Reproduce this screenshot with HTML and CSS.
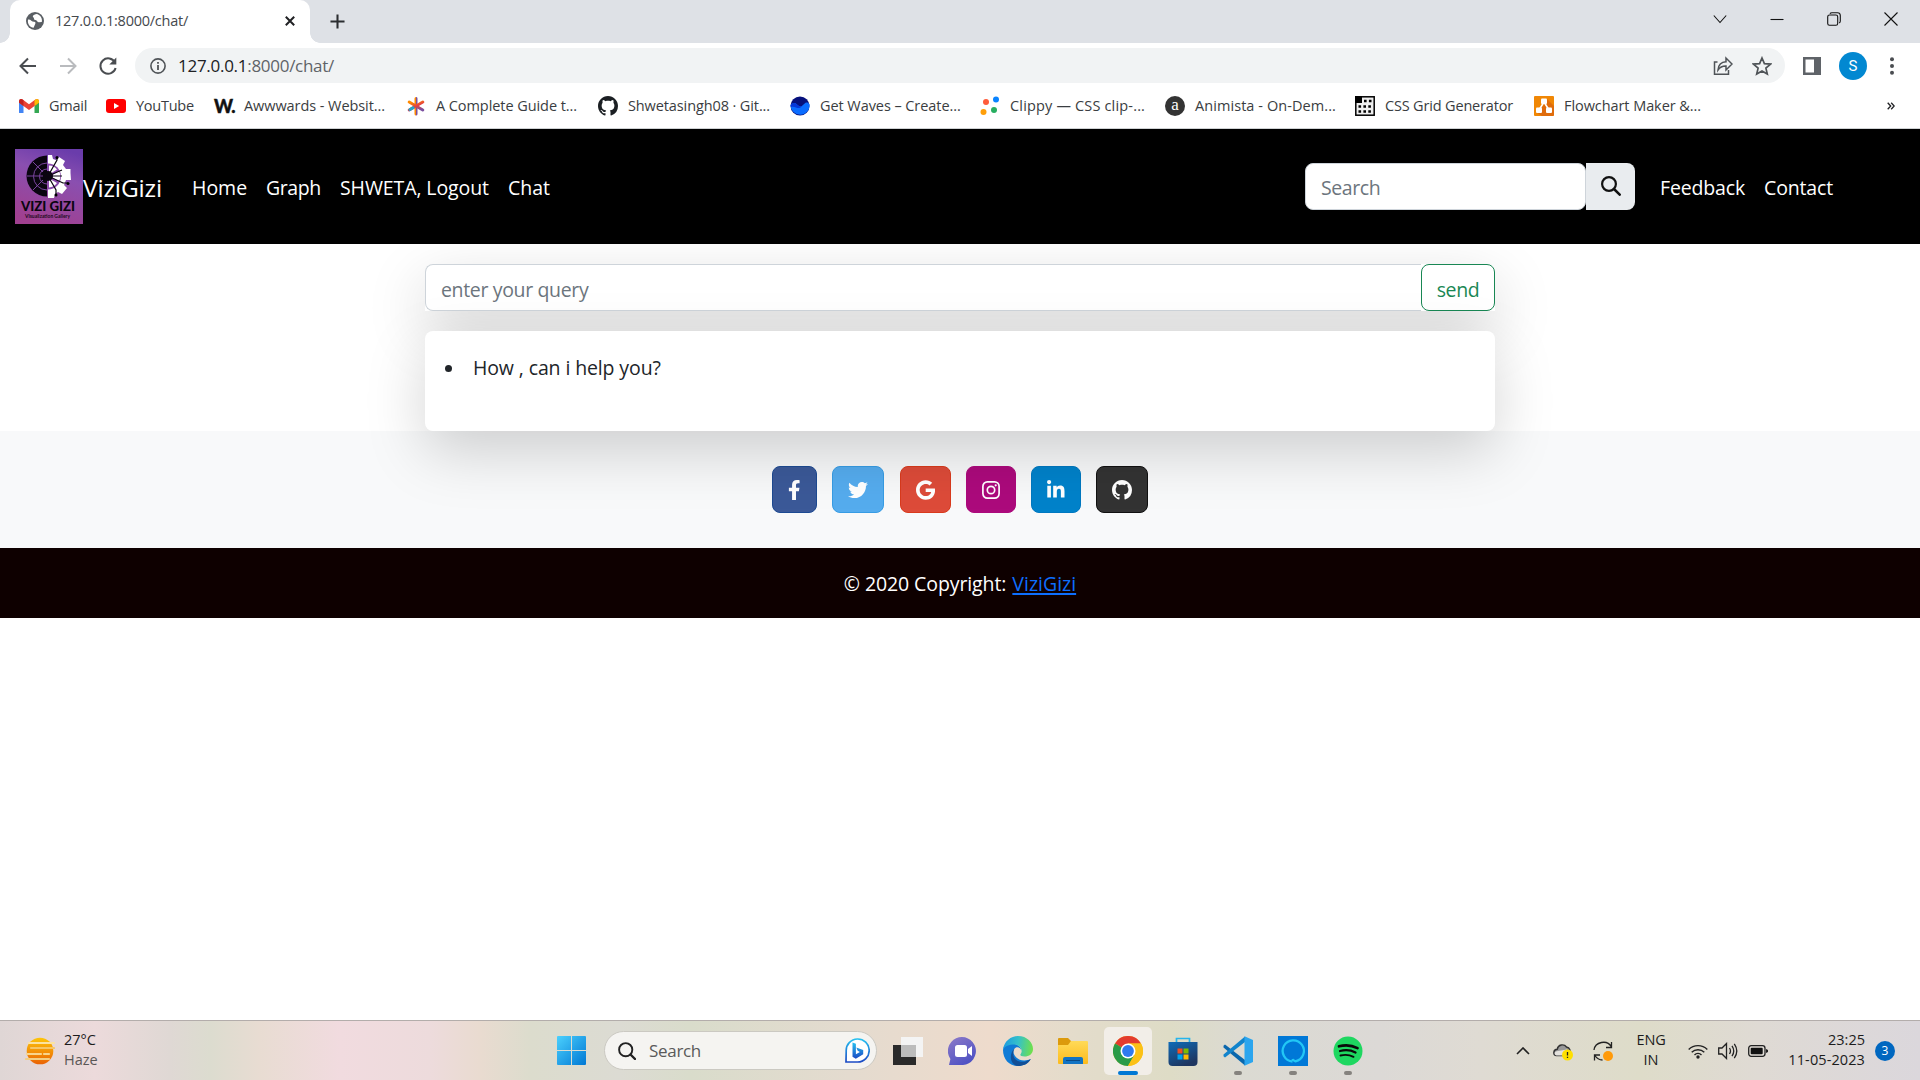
FILE: index.html
```html
<!DOCTYPE html>
<html lang="en">
<head>
<meta charset="utf-8">
<title>127.0.0.1:8000/chat/</title>
<link rel="stylesheet" href="styles.css">
</head>
<body>
<header class="browser">
  <div class="tabstrip">
    <div class="tab">
      <svg class="tab-icon" viewBox="0 0 18 18"><circle cx="9" cy="9" r="9" fill="#5a5f64"/><path d="M2 7.500C5 7 5.500 10 8.200 9.800c1.300 0 1.600 1 1 2.200l-1.600 3.800C4 15.700 1.200 12 2 7.500zM10.500 1.900c-2.500.4-4.500 2-3.200 3.300 1.200 1 .2 2.600 2.200 2.800 2 .1 1.500 2.400 3.500 2.300l2.800-.2C16.800 6 14 2.500 10.500 1.900z" fill="#fff"/></svg>
      <span class="t tab-title">127.0.0.1:8000/chat/</span>
      <svg class="tab-close" viewBox="0 0 10 10"><path d="M.8.8l8.400 8.400M9.200.8L.8 9.200" stroke="#202124" stroke-width="2"/></svg>
    </div>
    <svg class="tab-new" viewBox="0 0 16 16"><path d="M8 .5v15M.5 8h15" stroke="#2b2e31" stroke-width="2.200"/></svg>
    <div class="window-controls">
      <svg viewBox="0 0 14 14"><path d="M.8 3.500L7 10.500l6.200-7" /></svg>
      <svg viewBox="0 0 14 14"><path d="M.5 7.500h13"/></svg>
      <svg viewBox="0 0 14 14"><rect x=".7" y="3" width="10" height="10.300" rx="1.800"/><path d="M3 1.800Q3.500.7 5 .7h5.500q2.800 0 2.800 2.800V9q0 1.500-1.100 2"/></svg>
      <svg viewBox="0 0 14 14"><path d="M.5.5l13 13M13.500.5l-13 13"/></svg>
    </div>
  </div>
  <div class="toolbar">
    <div class="nav-icons">
      <svg viewBox="0 0 20 20"><path d="M18 10H3M10 2.500L2.500 10l7.500 7.500" stroke="#4a4d51"/></svg>
      <svg viewBox="0 0 20 20"><path d="M2 10h15M10 2.500l7.500 7.500-7.500 7.500" stroke="#b9bbbe"/></svg>
      <svg viewBox="0 0 20 20"><path d="M17 6.500A7.700 7.700 0 1 0 17.600 12" stroke="#4a4d51"/><path d="M18.300 1.500v7h-7z" fill="#4a4d51"/></svg>
    </div>
    <div class="omnibox">
      <svg class="info" viewBox="0 0 16 16"><circle cx="8" cy="8" r="7.100" fill="none" stroke="#4f5357" stroke-width="1.600"/><path d="M8 7v5M8 4v1.800" stroke="#4f5357" stroke-width="1.800"/></svg>
      <span class="t url"><b>127.0.0.1</b>:8000/chat/</span>
      <svg class="share" viewBox="0 0 20 20"><path d="M4.500 6H1.500v12.300h14V14M5 14c.4-5 3-8 8-8.200V2l6 6-6 6v-3.900C9 10 7 11 5 14z" fill="none" stroke="#4f5357" stroke-width="1.500"/></svg>
      <svg class="star" viewBox="0 0 20 20"><path d="M10 2l2.400 5.600 6.100.5-4.600 4 1.400 6L10 14.900 4.700 18.100l1.400-6-4.600-4 6.100-.5z" fill="none" stroke="#4f5357" stroke-width="1.700"/></svg>
    </div>
    <svg class="panel" viewBox="0 0 18 18"><path d="M0 0h18v18H0zM2.500 2.500v13h8.500v-13z" fill="#5f6368" fill-rule="evenodd"/></svg>
    <span class="avatar">S</span>
    <svg class="dots" viewBox="0 0 4 18"><circle cx="2" cy="2.200" r="2"/><circle cx="2" cy="9" r="2"/><circle cx="2" cy="15.800" r="2"/></svg>
  </div>
  <div class="bookmarks">
    <a><svg viewBox="0 0 20 20"><path d="M0 5v11.500q0 .5.8.500H4.500V8z" fill="#4285f4"/><path d="M15.500 8v9h3.700q.8 0 .8-.5V5z" fill="#34a853"/><path d="M0 5q.3-2 2-2 1 0 2 .8l6 4.500 6-4.500q1-.8 2-.8 1.700 0 2 2l-1 2.500-9 6.500-9-6.500z" fill="#ea4335"/><path d="M0 5q.3-2 2-2 1 0 2.500 1.200v5.800L0 6.800z" fill="#c5221f"/><path d="M20 5q-.3-2-2-2-1 0-2.500 1.200v5.800l4.500-3.200z" fill="#fbbc04"/></svg><span class="t b1">Gmail</span></a>
    <a><svg viewBox="0 0 20 20"><rect y="3" width="20" height="14" rx="3" fill="#f00"/><path d="M8 7l5.200 3L8 13z" fill="#fff"/></svg><span class="t b2">YouTube</span></a>
    <a><span class="wicon">W.</span><span class="t b3">Awwwards - Websit...</span></a>
    <a><svg viewBox="0 0 20 20"><defs><linearGradient id="ast" x1=".2" y1="0" x2=".8" y2="1"><stop offset="0" stop-color="#ff8a00"/><stop offset=".5" stop-color="#e5413f"/><stop offset="1" stop-color="#7a4f9f"/></linearGradient></defs><g stroke="url(#ast)" stroke-width="3" stroke-linecap="round"><path d="M10 2.500l.01 15.500"/><path d="M3.200 6l13.600 8"/><path d="M16.800 6L3.200 14"/></g><path d="M4 13.500l3-1.700" stroke="#22a6c9" stroke-width="3" stroke-linecap="round"/></svg><span class="t b4">A Complete Guide t...</span></a>
    <a><svg viewBox="0 0 16 16"><path fill="#1b1f23" d="M8 0C3.580 0 0 3.580 0 8c0 3.540 2.290 6.530 5.470 7.590.4.07.55-.17.55-.38 0-.19-.01-.82-.01-1.490-2.010.37-2.530-.49-2.690-.94-.09-.23-.48-.94-.82-1.130-.28-.15-.68-.52-.01-.53.63-.01 1.080.58 1.230.82.72 1.210 1.870.87 2.330.66.07-.52.28-.87.51-1.070-1.780-.2-3.640-.89-3.640-3.950 0-.87.31-1.590.82-2.150-.08-.2-.36-1.020.08-2.120 0 0 .67-.21 2.200.82.64-.18 1.320-.27 2-.27s1.360.09 2 .27c1.530-1.040 2.200-.82 2.200-.82.44 1.100.16 1.920.08 2.120.51.56.82 1.270.82 2.150 0 3.070-1.870 3.750-3.650 3.950.29.25.54.73.54 1.480 0 1.070-.01 1.930-.01 2.200 0 .21.15.46.55.38A8.010 8.010 0 0016 8c0-4.420-3.580-8-8-8z"/></svg><span class="t b5">Shwetasingh08 · Git...</span></a>
    <a><svg viewBox="0 0 20 20"><circle cx="10" cy="10" r="9.500" fill="#06107c"/><path d="M.6 9C3 6.500 5 6.500 7 8.500s4 3 6.500 0 4-2.500 6-.5A9.500 9.500 0 1 1 .6 9z" fill="#0a6cff"/><path d="M.6 9C3 6.500 5 6.500 7 8.500s3.500 2.500 5 1.500c-2 2.500-4 2.500-6 1.500s-4-1-5-.5z" fill="#0636d8"/></svg><span class="t b6">Get Waves – Create...</span></a>
    <a><svg viewBox="0 0 20 20"><circle cx="6" cy="6" r="3" fill="#ff5b3a"/><circle cx="16" cy="3.500" r="3" fill="#0a84ff"/><circle cx="3.500" cy="16" r="3" fill="#ff9f0a"/><circle cx="14" cy="14" r="3" fill="#27ae60"/></svg><span class="t b7">Clippy — CSS clip-...</span></a>
    <a><span class="aicon">a</span><span class="t b8">Animista - On-Dem...</span></a>
    <a><svg viewBox="0 0 20 20"><rect x=".8" y=".8" width="18.400" height="18.400" fill="#eee" stroke="#000" stroke-width="1.500"/><path d="M0 0h7v7H0z"/><path d="M9 5h9M3.500 10.500H18M3.500 15.500H18" stroke="#000" stroke-width="2.600" stroke-dasharray="2.600 2.300"/></svg><span class="t b9">CSS Grid Generator</span></a>
    <a><svg viewBox="0 0 20 20"><rect width="20" height="20" rx="1" fill="#f08705"/><path d="M13 3l7 7v9l-1 1H8l-6-4 8-7z" fill="#df6c0c"/><path d="M10 6L5 14M10 6l5 8" stroke="#fff" stroke-width="1.600"/><rect x="7" y="2.500" width="6" height="5.500" rx="1" fill="#fff"/><rect x="2" y="11.500" width="6" height="5.500" rx="1" fill="#fff"/><rect x="12" y="11.500" width="6" height="5.500" rx="1" fill="#fff"/></svg><span class="t b10">Flowchart Maker &amp;...</span></a>
    <svg class="more" viewBox="0 0 8 8"><path d="M.7.7L3.700 4l-3 3.300M4.200.7L7.200 4l-3 3.300" fill="none" stroke="#202124" stroke-width="1.300"/></svg>
  </div>
</header>

<nav class="navbar">
  <a class="brand">
    <svg class="logo" viewBox="0 0 68 75">
      <defs><linearGradient id="lg" x1=".7" y1="0" x2=".4" y2="1"><stop offset="0" stop-color="#6a3cab"/><stop offset=".35" stop-color="#8a4fb0"/><stop offset="1" stop-color="#a04090"/></linearGradient></defs>
      <rect width="68" height="75" fill="url(#lg)"/>
      <path d="M32 6.500a20.500 20.500 0 0 0 0 41z" fill="#0a0510"/>
      <path d="M33 6h4l1 4 3 1 3-3 6 4-2 4 3 4 4.500 0v4l.5 7-5 0-2 5 3 3-5 6-4-2-3 2-1 4h-6z" fill="#fff"/>
      <g fill="none" stroke="#7a459f" stroke-width="1"><path d="M32 14a13.500 13.500 0 0 0 0 27M32 20a7.500 7.500 0 0 0 0 15M12 27h16M18 13l10 10M18 41l10-10"/></g>
      <path d="M33 14.500a13 13 0 0 1 0 26z" fill="#8a4bac"/>
      <path d="M34 16.500a10.500 10.500 0 0 1 8 4l-8 5zM44 22a11 11 0 0 1 0 10l-9-4.500zM42 34a10.500 10.500 0 0 1-8 4.500v-9z" fill="#fff"/>
      <g fill="none" stroke="#0a0510" stroke-width="1.200"><path d="M33 27h14M33 27l9-16V8M33 27l14-6M33 27l15 7h5M33 27l8 14v5"/></g>
      <circle cx="33" cy="27" r="5" fill="#0a0510"/><circle cx="42" cy="8.500" r="1.500"/><circle cx="53" cy="34.500" r="1.500"/><circle cx="41" cy="46" r="1.500"/>
      <text class="logo-name" x="6" y="61.500" textLength="54" lengthAdjust="spacingAndGlyphs">VIZI GIZI</text>
      <text class="logo-sub" x="10" y="69" textLength="45" lengthAdjust="spacingAndGlyphs">Visualization Gallery</text>
    </svg><span class="t brand-name">ViziGizi</span>
  </a>
  <a class="t n1">Home</a><a class="t n2">Graph</a><a class="t n3">SHWETA, Logout</a><a class="t n4">Chat</a>
  <div class="search">
    <div class="search-input"><span class="t n5">Search</span></div>
    <div class="search-btn"><svg viewBox="0 0 20 20"><circle cx="8" cy="8" r="6.900" fill="none" stroke="#111" stroke-width="2.200"/><path d="M13 13l5.700 5.700" stroke="#111" stroke-width="2.500" stroke-linecap="round"/></svg></div>
  </div>
  <a class="t n6">Feedback</a><a class="t n7">Contact</a>
</nav>

<main class="chat">
  <form class="query">
    <div class="query-input"><span class="t q1">enter your query</span></div>
    <div class="send"><span class="t q2">send</span></div>
  </form>
  <ul class="messages"><li><span class="t q3">How , can i help you?</span></li></ul>
</main>

<footer class="footer">
  <div class="social">
    <a class="fb"><svg viewBox="0 0 320 512"><path d="M279.140 288l14.220-92.660h-88.910v-60.130c0-25.350 12.420-50.060 52.240-50.060h40.420V6.260S260.430 0 225.360 0c-73.220 0-121.080 44.380-121.080 124.720v70.620H22.890V288h81.390v224h100.170V288z"/></svg></a>
    <a class="tw"><svg viewBox="0 0 512 512"><path d="M459.370 151.716c.325 4.548.325 9.097.325 13.645 0 138.720-105.583 298.558-298.558 298.558-59.452 0-114.680-17.219-161.137-47.106 8.447.974 16.568 1.299 25.340 1.299 49.055 0 94.213-16.568 130.274-44.832-46.132-.975-84.792-31.188-98.112-72.772 6.498.974 12.995 1.624 19.818 1.624 9.421 0 18.843-1.300 27.614-3.573-48.081-9.747-84.143-51.980-84.143-102.985v-1.299c13.969 7.797 30.214 12.670 47.431 13.319-28.264-18.843-46.781-51.005-46.781-87.391 0-19.492 5.197-37.360 14.294-52.954 51.655 63.675 129.300 105.258 216.365 109.807-1.624-7.797-2.599-15.918-2.599-24.040 0-57.828 46.782-104.934 104.934-104.934 30.213 0 57.502 12.670 76.670 33.137 23.715-4.548 46.456-13.320 66.599-25.340-7.798 24.366-24.366 44.833-46.132 57.827 21.117-2.273 41.584-8.122 60.426-16.243-14.292 20.791-32.161 39.308-52.628 54.253z"/></svg></a>
    <a class="gg"><svg viewBox="0 0 488 512"><path d="M488 261.800C488 403.300 391.100 504 248 504 110.800 504 0 393.200 0 256S110.800 8 248 8c66.800 0 123 24.500 166.300 64.900l-67.500 64.900C258.500 52.600 94.300 116.600 94.300 256c0 86.500 69.100 156.600 153.700 156.600 98.200 0 135-70.400 140.800-106.900H248v-85.300h236.100c2.300 12.700 3.900 24.900 3.900 41.400z"/></svg></a>
    <a class="ig"><svg viewBox="0 0 18 20"><rect x=".9" y="1.900" width="16.200" height="16.200" rx="4.500" fill="none" stroke="#fff" stroke-width="1.700"/><circle cx="9" cy="10" r="3.700" fill="none" stroke="#fff" stroke-width="1.700"/><circle cx="13.700" cy="5.300" r="1.100"/></svg></a>
    <a class="li"><svg viewBox="0 0 448 512"><path d="M100.280 448H7.400V148.900h92.880zM53.790 108.100C24.090 108.100 0 83.500 0 53.800a53.790 53.790 0 0 1 107.580 0c0 29.700-24.100 54.300-53.790 54.300zM447.900 448h-92.680V302.400c0-34.700-.7-79.200-48.290-79.200-48.290 0-55.690 37.700-55.690 76.700V448h-92.780V148.900h89.080v40.800h1.300c12.400-23.500 42.690-48.300 87.880-48.300 94 0 111.280 61.900 111.280 142.300V448z"/></svg></a>
    <a class="gh"><svg viewBox="0 0 16 16"><path d="M8 0C3.580 0 0 3.580 0 8c0 3.540 2.290 6.530 5.470 7.590.4.07.55-.17.55-.38 0-.19-.01-.82-.01-1.490-2.010.37-2.530-.49-2.690-.94-.09-.23-.48-.94-.82-1.130-.28-.15-.68-.52-.01-.53.63-.01 1.080.58 1.230.82.72 1.210 1.870.87 2.330.66.07-.52.28-.87.51-1.070-1.780-.2-3.640-.89-3.640-3.950 0-.87.31-1.590.82-2.150-.08-.2-.36-1.020.08-2.120 0 0 .67-.21 2.200.82.64-.18 1.320-.27 2-.27s1.360.09 2 .27c1.530-1.040 2.200-.82 2.200-.82.44 1.100.16 1.920.08 2.120.51.56.82 1.270.82 2.150 0 3.070-1.870 3.750-3.650 3.950.29.25.54.73.54 1.480 0 1.070-.01 1.930-.01 2.200 0 .21.15.46.55.38A8.010 8.010 0 0016 8c0-4.420-3.580-8-8-8z"/></svg></a>
  </div>
  <div class="copyright"><span class="t c1">© 2020 Copyright:</span><a class="t c2">ViziGizi</a></div>
</footer>

<div class="taskbar">
  <div class="weather">
    <svg viewBox="0 0 30 28"><defs><linearGradient id="sun" x1="0" y1="0" x2="0" y2="1"><stop offset="0" stop-color="#fdc50a"/><stop offset="1" stop-color="#ea6305"/></linearGradient></defs><circle cx="15" cy="14" r="13.300" fill="url(#sun)"/><g stroke-width="2.200" stroke-linecap="round"><path d="M4 6h25" stroke="#fbe3a0"/><path d="M6 11h23" stroke="#f6c766"/><path d="M2 17h14M19 17h5" stroke="#f8d58c"/><path d="M1 22h23" stroke="#f3cf84"/></g></svg>
    <div class="weather-text"><span class="t w1">27°C</span><span class="t w2">Haze</span></div>
  </div>
  <svg class="start" viewBox="0 0 29 29"><defs><linearGradient id="win" x1="0" y1="0" x2="1" y2="1"><stop offset="0" stop-color="#4bd0fd"/><stop offset="1" stop-color="#0078d4"/></linearGradient></defs><path fill="url(#win)" d="M1 0h13v14H0V1q0-1 1-1zM15 0h13q1 0 1 1v13H15zM0 15h14v14H1q-1 0-1-1zM15 15h14v13q0 1-1 1H15z"/></svg>
  <div class="task-search">
    <svg class="mag" viewBox="0 0 18 18"><circle cx="7.700" cy="7.700" r="6.600" fill="none" stroke="#222" stroke-width="1.900"/><path d="M12.500 12.500l4.500 4.500" stroke="#222" stroke-width="2.400" stroke-linecap="round"/></svg>
    <span class="t w3">Search</span>
    <svg class="bing" viewBox="0 0 25 25"><defs><linearGradient id="bing" x1="0" y1="0" x2="0" y2="1"><stop offset="0" stop-color="#26c1f0"/><stop offset="1" stop-color="#1b49c4"/></linearGradient></defs><path d="M1 24l.2-11A11.500 11.500 0 1 1 12.600 24z" fill="#fff" stroke="url(#bing)" stroke-width="1.700"/><path d="M7.500 4.500l3.400 1.200v10.500l4-2.200-2.200-1.200-1.400-3.400 6.900 2.700v4.200l-7.400 4.500-3.300-2z" fill="url(#bing)"/></svg>
  </div>
  <div class="apps">
    <span class="app"><svg viewBox="0 0 30 30"><path d="M0 9h23v20H0z" fill="#2a2a2a"/><path d="M8 1h22v20H8z" fill="#f4f4f4"/><path d="M8 9h15v12H8z" fill="#bcbcbc"/></svg></span>
    <span class="app"><svg viewBox="0 0 30 30"><defs><linearGradient id="meet" x1="0" y1="0" x2=".6" y2="1"><stop offset="0" stop-color="#8e7bc8"/><stop offset="1" stop-color="#4f52c4"/></linearGradient></defs><path d="M1 29l1.400-6A14 14 0 1 1 15 29z" fill="url(#meet)"/><rect x="7" y="9" width="12" height="12" rx="2.500" fill="#fff"/><path d="M20 13l4-3v10l-4-3z" fill="#fff"/></svg></span>
    <span class="app"><svg viewBox="0 0 30 30"><defs><linearGradient id="e1" x1="0" y1=".3" x2="1" y2=".4"><stop offset="0" stop-color="#1a9ae2"/><stop offset=".5" stop-color="#35c1c9"/><stop offset="1" stop-color="#6fe04c"/></linearGradient></defs><path d="M0 14C1 7 7 6 12 8c4 1 6.500 4 6.500 7-.5-2.500-3-4.500-5.500-3.500-3 1.500-3.500 5-1 8.500 3 4 9 6 15.800 3C25 28 20 30 15 30 6 30 0 23 0 14z" fill="#0f7bd6"/><path d="M11.500 12.500c-4 7 1 15 11 13l5.300-2.500C25 28 20 30 15 30 7 29 5.500 18 11.500 12.500z" fill="#124f96"/><path d="M0 14C1 5 8 0 15 0c9 0 15 6.500 15 13 0 5-4 7.500-8.500 7.500-4 0-5-1.500-3.500-3 2-3.500-.5-8.500-6.500-9C6 8.500 1.500 10 0 14z" fill="url(#e1)"/></svg></span>
    <span class="app"><svg viewBox="0 0 30 30"><defs><linearGradient id="fol" x1="0" y1="0" x2="0" y2="1"><stop offset="0" stop-color="#ffda58"/><stop offset="1" stop-color="#fdbb1c"/></linearGradient></defs><path d="M0 3q0-1 1-1h9l3 3v5H0z" fill="#dc9a0c"/><path d="M0 9h10l3-4h16q1 0 1 1v21q0 1-1 1H1q-1 0-1-1z" fill="url(#fol)"/><path d="M5 28v-5q0-2 2-2h16q2 0 2 2v5z" fill="#1274c4"/><path d="M8 24.500h14" stroke="#0a4a86"/></svg></span>
    <span class="app active"><svg viewBox="0 0 30 30"><circle cx="15" cy="15" r="15" fill="#fbc116"/><path d="M15 15L2 7.500A15 15 0 0 1 28 7.500H15z" fill="#e33b2e"/><path d="M2 7.500A15 15 0 0 0 15 30l6.500-11.200L15 15z" fill="#2a9b48"/><path d="M15 30A15 15 0 0 0 28 7.500H15l6.500 11.200z" fill="#fbc116"/><circle cx="15" cy="15" r="7.500" fill="#fff"/><circle cx="15" cy="15" r="5.900" fill="#2f7aee"/></svg></span>
    <span class="app"><svg viewBox="0 0 30 30"><defs><linearGradient id="st" x1="0" y1="0" x2=".5" y2="1"><stop offset="0" stop-color="#0f6cb8"/><stop offset="1" stop-color="#1e3660"/></linearGradient></defs><path d="M8.500 7V2.500h13V7" fill="none" stroke="#25b4ec" stroke-width="1.700"/><path d="M.5 6h29v20q0 4-4 4h-21q-4 0-4-4z" fill="url(#st)"/><path d="M9.500 12.500h5v5h-5z" fill="#f25022"/><path d="M15.500 12.500h5v5h-5z" fill="#7fba00"/><path d="M9.500 18.500h5v5h-5z" fill="#00a4ef"/><path d="M15.500 18.500h5v5h-5z" fill="#ffb900"/></svg></span>
    <span class="app run"><svg viewBox="0 0 30 30"><path d="M2 8.500L22 24v5.500L.5 11.500v-1.800z" fill="#0a67ad"/><path d="M2 21.500L22 6V.5L.5 18.500v1.800z" fill="#1184cc"/><path d="M21.500.3L30 4v22l-8.500 3.800z" fill="#2ba5ee"/></svg></span>
    <span class="app run"><svg viewBox="0 0 30 30"><path d="M0 0h30v30H0z" fill="#0078d7"/><path d="M14.500 25.500a10.600 10.600 0 1 1 3-.2q-2.500-.8-3-2.300" fill="none" stroke="#22c7f5" stroke-width="2.300"/></svg></span>
    <span class="app run"><svg viewBox="0 0 30 30"><circle cx="15" cy="15" r="14.500" fill="#1ed760"/><g fill="none" stroke="#0a0a0a" stroke-linecap="round"><path d="M6 10.300q10-2.600 18.500 1.800" stroke-width="2.700"/><path d="M7 15q8.500-2.200 15.500 1.500" stroke-width="2.300"/><path d="M7.500 19.500q7-1.800 13 1.300" stroke-width="1.900"/></g></svg></span>
  </div>
  <div class="tray">
    <svg class="chev" viewBox="0 0 14 8"><path d="M1 7l6-6 6 6" fill="none" stroke="#222" stroke-width="1.600"/></svg>
    <svg class="cloud" viewBox="0 0 20 20"><path d="M3.500 14.500C-.5 14 .2 8.500 4.200 8.300 5 3.500 11 2.500 13.500 6c3.500.5 4 3 3.500 8.500z" fill="#999" stroke="#333" stroke-width="1.400"/><path d="M3.500 14.500C0 13 2 10 5 10l9-1.500 2 6z" fill="#e4e2dd"/><circle cx="14.500" cy="14" r="5.500" fill="#ffe000"/><path d="M14.500 11v3.600M14.500 15.800v1.300" stroke="#222" stroke-width="1.300"/></svg>
    <svg class="sync" viewBox="0 0 20 20"><path d="M1 9C2 1 14-2 18.500 6M18.500 1v5.500H13M1.500 19.500V14H7M1.500 14c2 3 5 5 8 5" fill="none" stroke="#222" stroke-width="1.300"/><circle cx="15" cy="15" r="5" fill="#ff9a0a"/></svg>
    <div class="lang"><span class="t w4">ENG</span><span class="t w5">IN</span></div>
    <svg class="wifi" viewBox="0 0 20 16"><g fill="none" stroke="#222" stroke-width="1.400"><path d="M.7 6.500a13 13 0 0 1 18.600 0M3.700 9.300a9 9 0 0 1 12.600 0M6.500 12a5 5 0 0 1 7 0"/></g><circle cx="10" cy="14" r="1.700" fill="#222"/></svg>
    <svg class="sound" viewBox="0 0 20 18"><path d="M.7 6H4l4.500-4.500v15L4 12H.7zM11.500 6q2 3 0 6M14 3.800q3.500 5.200 0 10.400M16.300 1.800q5 7.200 0 14.400" fill="none" stroke="#222" stroke-width="1.300"/></svg>
    <svg class="battery" viewBox="0 0 20 12"><rect x=".7" y=".7" width="16.300" height="10.600" rx="2.500" fill="none" stroke="#222" stroke-width="1.300"/><rect x="2.700" y="2.700" width="12" height="6.600" rx="1" fill="#111"/><path d="M18 4l2 1v2l-2 1z" fill="#222"/></svg>
    <div class="clock"><span class="t w6">23:25</span><span class="t w7">11-05-2023</span></div>
    <span class="badge">3</span>
  </div>
</div>
</body>
</html>
```
FILE: styles.css
```css
* { box-sizing: border-box; }
body {
  margin: 0;
  height: 1080px;
  overflow: hidden;
  display: flex;
  flex-direction: column;
  background: #fff;
  font-family: "Open Sans", "Noto Sans", sans-serif;
  color: #212529;
}
svg { display: block; flex: none; }
.t { white-space: pre; }

/* Browser window */
.browser { flex: none; height: 129px; border-bottom: 1px solid #cfd2d4; }
.tabstrip { display: flex; align-items: center; height: 43px; background: #dee1e6; padding-left: 10px; }
.tab { position: relative; display: flex; align-items: center; width: 300px; height: 43px; padding: 0 15px 2px 16px; background: #fff; border-radius: 10px 10px 0 0; }
.tab::before, .tab::after { content: ""; position: absolute; bottom: 0; width: 10px; height: 10px; }
.tab::before { left: -10px; background: radial-gradient(circle at 0 0, transparent 9.500px, #fff 10px); }
.tab::after { right: -10px; background: radial-gradient(circle at 100% 0, transparent 9.500px, #fff 10px); }
.tab-icon { width: 18px; height: 18px; }
.tab-title { margin-left: 11px; font-size: 14.500px; letter-spacing: -.24px; color: #45494d; }
.tab-close { width: 10px; height: 10px; margin-left: auto; }
.tab-new { width: 15px; height: 15px; margin-left: 20px; }
.window-controls { display: flex; gap: 43px; margin: 0 22px 6px auto; }
.window-controls svg { width: 14px; height: 14px; fill: none; stroke: #111; stroke-width: 1.100; }

.toolbar { display: flex; align-items: center; height: 45px; padding: 0 26px 0 18px; }
.nav-icons { display: flex; gap: 20px; width: 117px; }
.nav-icons svg { width: 20px; height: 20px; fill: none; stroke-width: 2; }
.omnibox { display: flex; align-items: center; width: 1650px; height: 35px; padding: 0 13px 0 15px; border-radius: 18px; background: #f1f3f4; }
.info { width: 16px; height: 16px; }
.url { margin-left: 12px; font-size: 17px; letter-spacing: -.28px; color: #5f6368; }
.url b { font-weight: 400; color: #202124; }
.share { width: 20px; height: 20px; margin-left: auto; }
.star { width: 20px; height: 20px; margin-left: 19px; }
.panel { width: 18px; height: 18px; margin-left: 18px; }
.avatar { display: grid; place-items: center; width: 28px; height: 28px; margin-left: 18px; border-radius: 50%; background: #0288d1; color: #fff; font: 15px Roboto, sans-serif; }
.dots { width: 4px; height: 18px; margin-left: auto; fill: #4a4d51; }

.bookmarks { display: grid; grid-template-columns: 87px 108px 192px 192px 192px 190px 185px 190px 179px 353px 8px; align-items: center; height: 40px; padding: 0 0 4px 19px; }
.bookmarks a { display: flex; align-items: center; gap: 10px; font-size: 14.500px; color: #3a3d41; }
.bookmarks a svg { width: 20px; height: 20px; }
.bookmarks .t { margin-bottom: 2px; letter-spacing: -.07px; }
.bookmarks .b1, .bookmarks .b2 { letter-spacing: -.25px; }
.bookmarks .b5 { letter-spacing: -.11px; }
.bookmarks .b7 { letter-spacing: .17px; }
.bookmarks .b8 { letter-spacing: .07px; }
.bookmarks .b9 { letter-spacing: -.17px; }
.wicon { width: 20px; font: 900 18px/20px Lato, sans-serif; letter-spacing: -1px; color: #111; -webkit-text-stroke: .4px #111; }
.aicon { width: 20px; height: 20px; border-radius: 50%; background: #333; color: #fff; font: 17px/17px "Liberation Serif", serif; text-align: center; }
.more { width: 8px; height: 8px; }

/* Site navigation */
.navbar { flex: none; display: flex; align-items: center; height: 115px; padding: 0 88px 1px 15px; background: #000; color: #fff; font-size: 19.500px; }
.navbar .t { padding-top: 2px; }
.brand { display: flex; align-items: center; width: 177px; }
.logo { width: 68px; height: 75px; }
.logo-name { font: 900 12.500px Lato, sans-serif; fill: #0a0510; }
.logo-sub { font: 700 5px Lato, sans-serif; fill: #1c0a20; }
.brand-name { font-size: 24.500px; letter-spacing: -.14px; }
.n1 { width: 74px; }
.n2 { width: 74px; letter-spacing: -.4px; }
.n3 { width: 168px; letter-spacing: -.09px; }
.n5 { letter-spacing: -.4px; }
.search { display: flex; width: 330px; height: 47px; margin-left: auto; margin-right: 25px; }
.search-input { display: flex; align-items: center; width: 281px; border: 1px solid #ced4da; border-radius: 8px; background: #fff; padding-left: 15px; color: #6c757d; }
.search-btn { display: grid; place-items: center; width: 49px; border-radius: 0 8px 8px 0; background: #e9ecef; }
.search-btn svg { width: 20px; height: 20px; }
.n6 { width: 104px; letter-spacing: -.16px; }
.n7 { width: 68px; letter-spacing: -.15px; }

/* Chat panel */
.chat { flex: none; width: 1070px; height: 187px; margin: 0 auto; padding-top: 20px; font-size: 19.500px; }
.query { position: relative; display: flex; height: 47px; margin: 0 0 20px; background: #fff; border-radius: 8px 8px 0 0; box-shadow: 0 20px 60px rgba(0, 0, 0, .175); }
.query-input { display: flex; align-items: center; flex: 1; padding: 3px 0 0 15px; border: 1px solid #ced4da; border-right: 0; border-radius: 8px 0 0 8px; color: #6c757d; }
.q1 { letter-spacing: -.35px; }
.send { display: grid; place-items: center; width: 74px; padding-top: 3px; border: 1px solid #198754; border-radius: 8px; color: #198754; }
.q2 { letter-spacing: -.4px; }
.q3 { letter-spacing: -.12px; }
.messages { position: relative; height: 100px; margin: 0; padding: 19px 0 0 48px; border-radius: 8px; background: #fff; box-shadow: 0 20px 60px rgba(0, 0, 0, .175); list-style: none; }
.messages li { display: flex; align-items: center; height: 34px; }
.messages li::before { content: ""; width: 7px; height: 7px; margin: 2px 21px 0 -28px; border-radius: 50%; background: #212529; }

/* Footer */
.footer { flex: none; height: 187px; background: #f8f9fa; }
.social { display: flex; justify-content: center; gap: 15px; height: 117px; padding-top: 35px; }
.social a { display: grid; place-items: center; height: 47px; padding-top: 1px; border-radius: 8px; border: 1px solid; }
.social svg { height: 20px; fill: #fff; }
.social .fb { width: 45px; background: #3b5998; border-color: #1d4a92; }
.social .tw { width: 52px; background: #55acee; border-color: #379ce4; }
.social .gg { width: 51px; margin-left: 1px; background: #dd4b39; border-color: #d93a1c; }
.social .ig { width: 50px; background: #ac0a7c; border-color: #ac0a7c; }
.social .li { width: 50px; background: #0082ca; border-color: #0078c0; }
.social .gh { width: 52px; background: #333; border-color: #111; }
.copyright { display: flex; justify-content: center; align-items: center; gap: 6px; height: 70px; background: #0e0000; color: #fff; font-size: 19.500px; }
.c1 { letter-spacing: -.1px; }
.c2 { color: #0d6efd; text-decoration: underline; text-underline-offset: 2px; text-decoration-thickness: 2px; }

/* Desktop taskbar */
.taskbar { flex: none; display: flex; align-items: center; height: 60px; margin-top: auto; border-top: 1px solid #b3adab; padding-right: 25px; font-size: 14.500px; color: #1c1c1c;
  background: linear-gradient(90deg, #dfd6d5 0, #ecdadb 95px, #dfd8d4 170px, #dcdccf 210px, #e8dcd2 260px, #f1dbdf 340px, #eddbdc 430px, #e9dbd0 480px, #dcdccd 530px, #dcdbd3 620px, #d9dccb 690px, #e4dbcf 850px, #eedbcc 990px, #e3dccb 1080px, #dedcc6 1170px, #dbdad2 1240px, #dcd9d6 1380px, #dfdbd3 1480px, #dedcc9 1640px, #dfdad4 1760px, #dbd7dc 1920px); }
.weather { display: flex; align-items: center; gap: 9px; width: 532px; padding-left: 25px; margin-right: 25px; }
.weather svg { width: 30px; height: 28px; }
.weather-text, .lang, .clock { display: flex; flex-direction: column; line-height: 20px; padding-bottom: 2px; }
.w2 { color: #5a5756; }
.start { width: 29px; height: 29px; }
.task-search { display: flex; align-items: center; width: 273px; height: 39px; margin-left: 18px; padding: 0 6px 0 13px; border: 1px solid #cbc9c2; border-radius: 20px; background: #f5f4f1; font-size: 17px; color: #5a5a5a; }
.mag { width: 18px; height: 18px; }
.w3 { margin-left: 13px; letter-spacing: -.31px; }
.w4 { letter-spacing: -.18px; }
.w7 { letter-spacing: .1px; }
.bing { width: 25px; height: 25px; margin-left: auto; }
.apps { display: flex; gap: 7px; margin-left: 7px; }
.app { display: flex; flex-direction: column; align-items: center; justify-content: space-between; width: 48px; height: 48px; padding-top: 9px; border-radius: 5px; }
.app svg { width: 30px; height: 30px; }
.active { background: #f2eee8; }
.active::after { content: ""; width: 20px; height: 4px; border-radius: 2px; background: #0078d4; }
.run::after { content: ""; width: 8px; height: 4px; border-radius: 2px; background: #85827e; }
.tray { display: flex; align-items: center; margin-left: auto; }
.chev { width: 14px; height: 8px; margin-right: 23px; }
.cloud, .sync { width: 20px; height: 20px; margin-right: 20px; }
.sync { margin-right: 24px; }
.lang { width: 28px; align-items: center; margin-right: 23px; }
.wifi { width: 20px; height: 16px; margin-right: 10px; }
.sound { width: 20px; height: 18px; margin-right: 10px; }
.battery { width: 20px; height: 12px; margin-right: 20px; }
.clock { width: 77px; align-items: flex-end; }
.badge { display: grid; place-items: center; width: 20px; height: 20px; margin-left: 10px; border-radius: 50%; background: #0067c0; color: #fff; font-size: 12px; }
```
